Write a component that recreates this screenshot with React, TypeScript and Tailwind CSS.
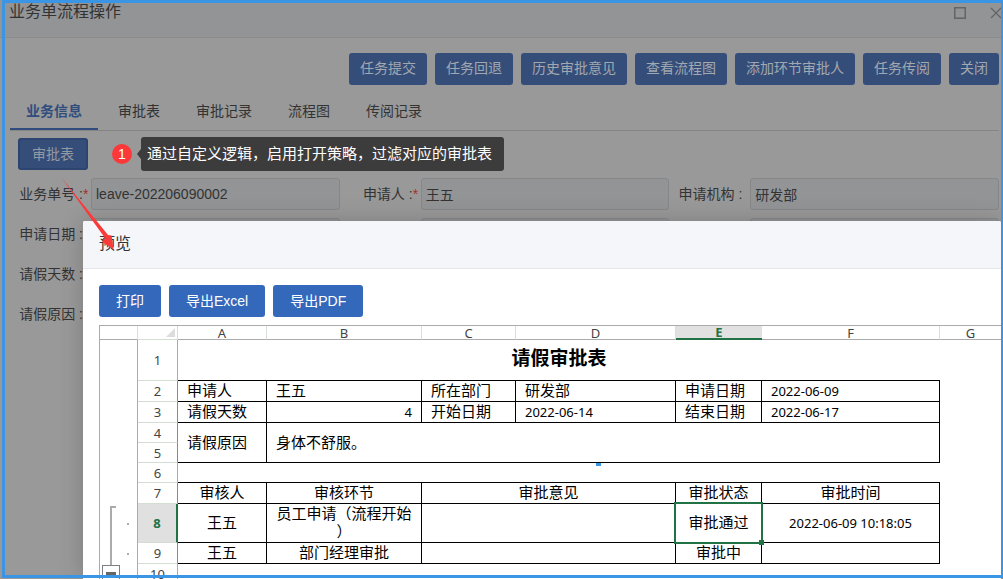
import type { ReactNode } from 'react';
import { clsx } from 'clsx';

const actions = ['任务提交', '任务回退', '历史审批意见', '查看流程图', '添加环节审批人', '任务传阅', '关闭'];
const tabs = ['业务信息', '审批表', '审批记录', '流程图', '传阅记录'];
const exportActions = ['打印', '导出Excel', '导出PDF'];
const columns = ['A', 'B', 'C', 'D', 'E', 'F', 'G'];

interface FieldProps {
  id: string;
  label?: string;
  name?: string;
  value?: string;
  required?: boolean;
}

function Field({ id, label, name, value = '', required }: FieldProps) {
  return (
    <div className="flex h-8 items-center">
      <div className="flex w-[81px] shrink-0 justify-end whitespace-pre text-sm text-[#333]">
        {label && <label htmlFor={id}>{label + ' :'}</label>}
        <span className="w-2 text-[#a5321f]">{required ? '*' : ''}</span>
      </div>
      <input
        id={id}
        aria-label={name}
        readOnly
        defaultValue={value}
        className="h-8 min-w-0 flex-1 rounded-[3px] border border-[#858789] bg-[#929496] px-1 text-sm text-[#333] outline-none"
      />
    </div>
  );
}

interface CellProps {
  children?: ReactNode;
  align?: 'left' | 'center' | 'right';
  numeric?: boolean;
  className?: string;
  colSpan?: number;
  rowSpan?: number;
}

// Celda con borde negro a la derecha y abajo
function Cell({ children, align = 'left', numeric, className, colSpan, rowSpan }: CellProps) {
  return (
    <td
      colSpan={colSpan}
      rowSpan={rowSpan}
      className={clsx(
        'border-r border-b border-black pt-0 align-middle',
        numeric ? 'pb-0 text-[13px]' : 'pb-0.5',
        align === 'left' && 'pr-0 pl-[9px] text-left',
        align === 'center' && 'px-0 text-center',
        align === 'right' && 'pr-[9px] pl-0 text-right',
        className,
      )}
    >
      {children}
    </td>
  );
}

function RowHead({ n, black }: { n: number; black?: boolean }) {
  const active = n === 8;
  return (
    <th
      scope="row"
      className={clsx(
        'border-b border-b-[#d3ddd3] p-0 text-center text-[13px]',
        active
          ? 'border-r-2 border-r-[#217346] bg-[#e0e0e0] font-bold text-[#217346]'
          : 'border-r font-normal text-[#444]',
        !active && (black ? 'border-r-[#8a8a8a]' : 'border-r-[#ababab]'),
      )}
    >
      {n}
    </th>
  );
}

function Outline() {
  return (
    <td rowSpan={10} className="relative border-x border-[#ababab] p-0">
      <svg className="absolute top-0 left-0 h-[226px] w-[37px]" viewBox="0 0 37 226" fill="none">
        <path d="M16 167H11V226" stroke="#ababab" strokeWidth="2" />
        <path d="M27 183h2v2h-2zM27 213h2v2h-2z" fill="#ababab" />
      </svg>
      <button
        aria-label="折叠"
        className="absolute top-[225px] left-0.5 flex size-[18px] items-center justify-center border border-[#7d7d86] bg-white"
      >
        <span className="h-1 w-2.5 bg-[#666]" />
      </button>
    </td>
  );
}

function Sheet() {
  return (
    <table className="w-full table-fixed border-separate border-spacing-0 border-t border-[#ababab] font-['Noto_Sans','Noto_Sans_CJK_SC',sans-serif] text-[15px] leading-[18px] text-black">
      <colgroup>
        <col className="w-[39px]" />
        <col className="w-10" />
        <col className="w-[89px]" />
        <col className="w-[155px]" />
        <col className="w-[94px]" />
        <col className="w-40" />
        <col className="w-[86px]" />
        <col className="w-[178px]" />
        <col />
      </colgroup>
      <thead>
        <tr className="h-3.5 text-[13px] leading-3 text-[#444]">
          <td className="border-r border-b border-l border-[#ababab] border-r-[#d9dfd9] p-0" />
          <td className="border-r border-b border-[#d3ddd3] p-0">
            <svg className="mr-0.5 ml-auto size-[9px]" viewBox="0 0 9 9">
              <path d="M9 0V9H0z" fill="#dcdcdc" />
            </svg>
          </td>
          {columns.map((c) => (
            <th
              key={c}
              scope="col"
              className={clsx(
                'p-0',
                c === 'E'
                  ? 'border-b-2 border-[#217346] bg-[#e1e1e1] text-[#217346]'
                  : 'border-b border-[#ababab] font-normal',
                c !== 'E' && c !== 'G' && 'border-r border-r-[#d9dfd9]',
              )}
            >
              {c}
            </th>
          ))}
        </tr>
      </thead>
      <tbody>
        <tr className="h-[41px]">
          <Outline />
          <RowHead n={1} />
          <td colSpan={6} className="border-b border-black p-0 pb-1 text-center text-[19px] font-bold">
            请假审批表
          </td>
          <td />
        </tr>
        <tr className="h-[21px]">
          <RowHead n={2} black />
          <Cell>申请人</Cell>
          <Cell>王五</Cell>
          <Cell>所在部门</Cell>
          <Cell>研发部</Cell>
          <Cell>申请日期</Cell>
          <Cell numeric>2022-06-09</Cell>
          <td />
        </tr>
        <tr className="h-[21px]">
          <RowHead n={3} black />
          <Cell>请假天数</Cell>
          <Cell align="right" numeric>4</Cell>
          <Cell>开始日期</Cell>
          <Cell numeric>2022-06-14</Cell>
          <Cell>结束日期</Cell>
          <Cell numeric>2022-06-17</Cell>
          <td />
        </tr>
        <tr className="h-5">
          <RowHead n={4} black />
          <Cell rowSpan={2}>请假原因</Cell>
          <Cell rowSpan={2} colSpan={5}>身体不舒服。</Cell>
          <td />
        </tr>
        <tr className="h-5">
          <RowHead n={5} black />
          <td />
        </tr>
        <tr className="h-5">
          <RowHead n={6} />
          <td colSpan={3} className="border-b border-black p-0" />
          <td className="relative border-b border-black p-0">
            <span className="absolute top-0 left-1/2 h-[3px] w-[5px] bg-[#3a95e4]" />
          </td>
          <td colSpan={2} className="border-b border-black p-0" />
          <td />
        </tr>
        <tr className="h-[21px]">
          <RowHead n={7} black />
          <Cell align="center">审核人</Cell>
          <Cell align="center">审核环节</Cell>
          <Cell align="center" colSpan={2}>审批意见</Cell>
          <Cell align="center">审批状态</Cell>
          <Cell align="center">审批时间</Cell>
          <td />
        </tr>
        <tr className="h-[39px]">
          <RowHead n={8} />
          <Cell align="center">王五</Cell>
          <Cell align="center">
            员工申请（流程开始
            <br />）
          </Cell>
          <Cell colSpan={2} />
          <Cell align="center" className="relative">
            审批通过
            {/* Marco de selección */}
            <span className="absolute -inset-x-0.5 -inset-y-0.5 border-2 border-[#217346]" />
            <span className="absolute -right-[3px] -bottom-[3px] size-[5px] bg-[#217346]" />
          </Cell>
          <Cell align="center" numeric>2022-06-09 10:18:05</Cell>
          <td />
        </tr>
        <tr className="h-[21px]">
          <RowHead n={9} black />
          <Cell align="center">王五</Cell>
          <Cell align="center">部门经理审批</Cell>
          <Cell colSpan={2} />
          <Cell align="center">审批中</Cell>
          <Cell />
          <td />
        </tr>
        <tr className="h-5">
          <RowHead n={10} />
          <td colSpan={7} />
        </tr>
      </tbody>
    </table>
  );
}

function PreviewDialog() {
  return (
    <section
      role="dialog"
      aria-label="预览"
      className="absolute top-[221px] right-0.5 bottom-0 left-[83px] overflow-hidden rounded-t-[2px] bg-white shadow-[1px_1px_24px_rgba(0,0,0,0.2)]"
    >
      <h2 className="border-b border-[#e6e7ea] bg-[#f5f6fa] px-4 pt-[11px] pb-3 text-base leading-6 text-[#333]">预览</h2>
      <div className="pt-4 pl-4">
        <div className="mb-2 flex gap-2">
          {exportActions.map((a) => (
            <button key={a} className="h-8 rounded-[3px] bg-[#3468bb] px-[17px] text-sm text-white">
              {a}
            </button>
          ))}
        </div>
        <Sheet />
      </div>
    </section>
  );
}

export default function App() {
  return (
    <div className="relative h-screen overflow-hidden bg-[#999] font-['Liberation_Sans','Noto_Sans_CJK_SC',sans-serif] text-[#333]">
      <header className="flex h-[38px] items-start justify-between border-b border-[#8a8c8d] bg-[#929496] pl-[9px]">
        <h1 className="text-base leading-6">业务单流程操作</h1>
        <div className="flex gap-6 pt-[7px] pr-px text-[#626466]">
          <button aria-label="最大化">
            <svg className="size-3" viewBox="0 0 12 12" fill="none" stroke="currentColor" strokeWidth="1.5">
              <path d="M.75.75h10.5v10.5H.75z" />
            </svg>
          </button>
          <button aria-label="关闭窗口">
            <svg className="size-3" viewBox="0 0 12 12" fill="none" stroke="currentColor" strokeWidth="1.3">
              <path d="M1 1l10 10M11 1L1 11" />
            </svg>
          </button>
        </div>
      </header>

      <main className="pr-1 pl-2.5">
        <div className="flex justify-end gap-2 pt-[15px]">
          {actions.map((a) => (
            <button key={a} className="h-8 rounded-[3px] bg-[#354e79] px-[11px] pb-0.5 text-sm whitespace-nowrap text-[#a2a7b0]">
              {a}
            </button>
          ))}
        </div>

        <nav className="mt-2 flex h-[38px] gap-1 border-b border-[#858585]">
          {tabs.map((t, i) => (
            <button
              key={t}
              className={clsx(
                'h-[37px] px-4 text-sm',
                i === 0 ? 'border-b-2 border-[#304d7e] font-bold text-[#304d7e]' : 'border-b-2 border-transparent text-[#333]',
              )}
            >
              {t}
            </button>
          ))}
        </nav>

        <div className="flex items-center pt-[6px] pl-2">
          <button className="my-px h-8 rounded-[3px] border-2 border-[#2b4470] bg-[#354e79] px-3 text-sm text-[#9399a3]">
            审批表
          </button>
          <span className="ml-6 flex size-5 items-center justify-center rounded-full bg-[#fd3838] text-sm text-white">1</span>
          <div className="ml-[5px] flex items-center">
            <span className="border-y-[5px] border-r-4 border-y-transparent border-r-[#3c3c3c]" />
            <p className="h-[34px] rounded-[3px] bg-[#3c3c3c] px-[6px] pr-3 text-[15px] leading-[34px] text-white">
              通过自定义逻辑，启用打开策略，过滤对应的审批表
            </p>
          </div>
        </div>

        <form className="mt-[7px] grid grid-cols-3 gap-y-2">
          <Field id="billNo" label="业务单号" value="leave-202206090002" required />
          <Field id="applicant" label="申请人" value="王五" required />
          <Field id="org" label="申请机构" value="研发部" />
          <Field id="applyDate" label="申请日期" />
          <Field id="startDate" name="开始日期" />
          <Field id="endDate" name="结束日期" />
          <div className="col-span-3">
            <Field id="days" label="请假天数" />
          </div>
          <div className="col-span-3">
            <Field id="reason" label="请假原因" />
          </div>
        </form>
      </main>

      <PreviewDialog />

      {/* Flecha hacia el título del diálogo */}
      <svg className="pointer-events-none absolute top-[177px] left-[61px] h-[73px] w-[54px]" viewBox="0 0 54 73">
        <path d="M0 0L47 58L50.500 58.500L52.500 72.500L41 65L44 61Z" fill="#fb3a3a" />
      </svg>

      {/* Marco azul */}
      <div className="pointer-events-none absolute top-0 right-0 bottom-px left-0.5 border-[3px] border-r-2 border-[#3a95e4]" />
    </div>
  );
}
